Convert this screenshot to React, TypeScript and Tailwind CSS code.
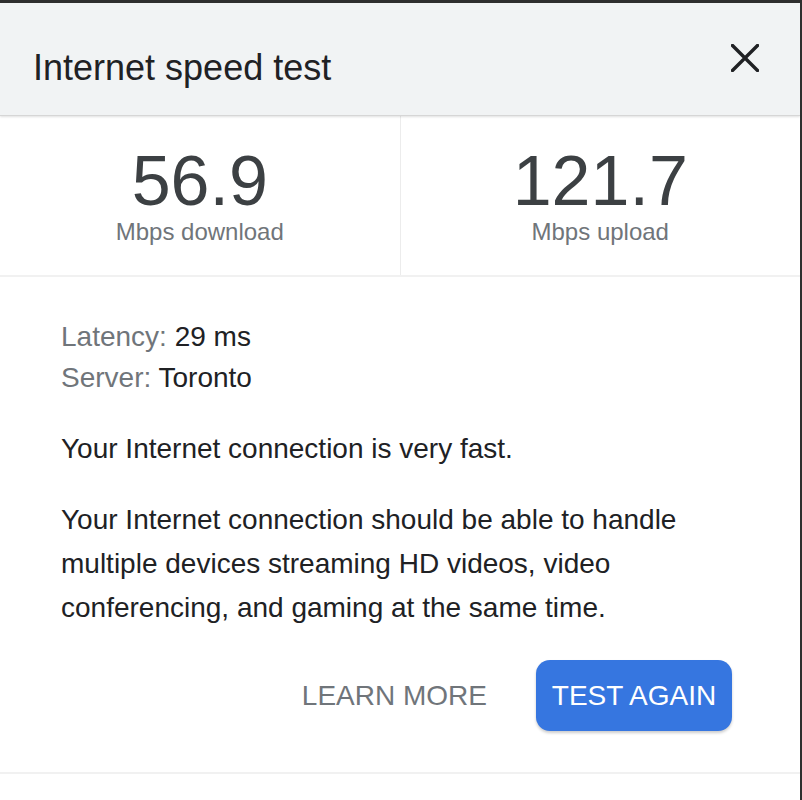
import React from "react";

const font = { fontFamily: '"Liberation Sans", Arial, sans-serif' };

const Stat = ({ value, label }: { value: string; label: string }) => (
  <div className="flex flex-1 flex-col items-center pt-[31px] pb-[31px]">
    <div className="text-[70px] leading-[68px] text-[#3c4043]">{value}</div>
    <div className="mt-[5px] text-[24px] leading-[24px] text-[#70757a]">{label}</div>
  </div>
);

const App: React.FC = () => {
  return (
    <div
      className="w-[802px] h-[800px] bg-white border-t-[3px] border-r-2 border-[#2e2e2e] overflow-hidden"
      style={font}
    >
      {/* Header */}
      <div className="relative z-10 flex h-[113px] items-start justify-between bg-[#f1f3f4] pl-[33px] pr-[41px] border-b border-[#d6d6d6] shadow-[0_1px_2px_rgba(0,0,0,0.12)]">
        <h1 className="mt-[47px] text-[36px] leading-[36px] text-[#202124]">Internet speed test</h1>
        <button className="mt-[41px]" aria-label="Close">
          <svg width="28" height="28" viewBox="0 0 28 28">
            <path d="M1.5 1.5 L26.5 26.5 M26.5 1.5 L1.5 26.5" stroke="#202124" strokeWidth="3.4" strokeLinecap="square" fill="none" />
          </svg>
        </button>
      </div>

      {/* Stats */}
      <div className="flex border-b-2 border-[#f1f1f1]">
        <Stat value="56.9" label="Mbps download" />
        <div className="w-px bg-[#ececec]" />
        <Stat value="121.7" label="Mbps upload" />
      </div>

      {/* Body */}
      <div className="pl-[61px] pr-[68px] pt-[39px] text-[28px] text-[#202124]">
        <div className="leading-[41px]">
          <div>
            <span className="text-[#70757a]">Latency:</span> 29 ms
          </div>
          <div>
            <span className="text-[#70757a]">Server:</span> Toronto
          </div>
        </div>
        <p className="mt-[29px] leading-[44px]">Your Internet connection is very fast.</p>
        <p className="mt-[27px] leading-[44px]">
          Your Internet connection should be able to handle multiple devices streaming HD videos, video
          conferencing, and gaming at the same time.
        </p>

        <div className="mt-[30px] flex items-center justify-end">
          <button className="text-[28px] leading-[28px] text-[#70757a]">LEARN MORE</button>
          <button className="ml-[49px] flex h-[71px] w-[196px] items-center justify-center rounded-[14px] bg-[#3676e0] text-[28px] leading-[28px] text-white shadow-[0_2px_3px_rgba(0,0,0,0.2)]">
            TEST AGAIN
          </button>
        </div>
      </div>

      <div className="mt-[41px] border-b-2 border-[#f1f1f1]" />
    </div>
  );
};

export default App;
